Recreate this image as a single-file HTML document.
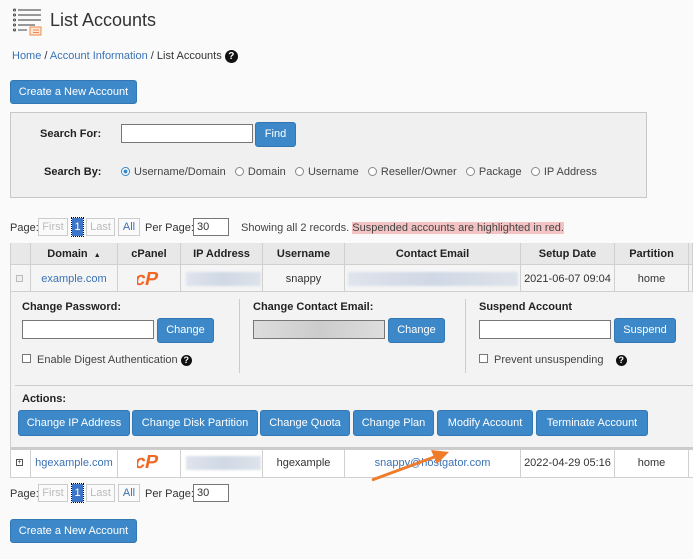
<!DOCTYPE html>
<html><head><meta charset="utf-8"><style>
*{box-sizing:border-box;margin:0;padding:0}
body{width:693px;height:559px;overflow:hidden;background:#fafafa;font-family:"Liberation Sans",sans-serif;font-size:11px;color:#333;position:relative}
.a{position:absolute;white-space:nowrap}
.t{margin-top:2px}
.btn{position:absolute;background:#3d88c8;color:#fff;border:1px solid #3277b3;border-radius:3px;text-align:center;font-size:11px}
.inp{position:absolute;background:#fff;border:1px solid #777}
.lnk{color:#3a72b5}
.b{font-weight:bold;color:#222}
.pg{position:absolute;border:1px solid #ccc;color:#bbb;text-align:center;height:18px;line-height:16px;background:#fafafa}
.radio{display:inline-block;width:9px;height:9px;border:1px solid #888;border-radius:50%;vertical-align:-1px;margin-right:4px;background:#fff}
.cb{position:absolute;width:9px;height:9px;border:1px solid #777;background:#fff}
.q{display:inline-block;width:13px;height:13px;border-radius:50%;background:#111;color:#fff;font-weight:bold;font-size:10px;text-align:center;line-height:13px}
.blur{position:absolute;background:linear-gradient(90deg,#dfe4ec,#cfd8e5,#dde3ea);filter:blur(1px);height:14px}
.cell{position:absolute;border-right:1px solid #d0d0d0;text-align:center;line-height:23px}
</style></head><body>
<svg class="a" style="left:13px;top:8px" width="30" height="28" viewBox="0 0 30 28">
<g fill="none" stroke="#444" stroke-width="1"><circle cx="1.5" cy="2" r="1"/><circle cx="1.5" cy="7" r="1"/><circle cx="1.5" cy="12" r="1"/><circle cx="1.5" cy="17" r="1"/><circle cx="1.5" cy="22" r="1"/></g>
<g stroke="#777" stroke-width="1.4"><line x1="5" y1="2" x2="28" y2="2"/><line x1="5" y1="7" x2="28" y2="7"/><line x1="5" y1="12" x2="28" y2="12"/><line x1="5" y1="17" x2="22" y2="17"/><line x1="5" y1="22" x2="14" y2="22"/></g>
<rect x="17" y="19" width="11" height="8" fill="#fde6d4" stroke="#f08a4b"/><line x1="20" y1="22" x2="26" y2="22" stroke="#f08a4b"/><line x1="20" y1="24.5" x2="26" y2="24.5" stroke="#f08a4b"/>
</svg>
<div class="a" style="left:50px;top:10px;font-size:18px;color:#333">List Accounts</div>
<div class="a" style="left:12px;top:50px;font-size:11px"><span class="lnk">Home</span> / <span class="lnk">Account Information</span> / List Accounts <span class="q">?</span></div>
<div class="btn" style="left:10px;top:80px;width:127px;height:24px;line-height:22px">Create a New Account</div>

<div class="a" style="left:10px;top:112px;width:637px;height:86px;background:#f0f0f0;border:1px solid #c8c8c8"></div>
<div class="a b t" style="left:40px;top:126px">Search For:</div>
<div class="inp" style="left:121px;top:124px;width:132px;height:19px"></div>
<div class="btn" style="left:255px;top:122px;width:41px;height:25px;line-height:23px">Find</div>
<div class="a b t" style="left:44px;top:164px">Search By:</div>
<div class="a t" style="left:121px;top:164px;color:#444"><span class="radio" style="border-color:#3d88c8;background:radial-gradient(#3d88c8 35%,#fff 45%)"></span>Username/Domain &nbsp; <span class="radio"></span>Domain &nbsp; <span class="radio"></span>Username &nbsp; <span class="radio"></span>Reseller/Owner &nbsp; <span class="radio"></span>Package &nbsp; <span class="radio"></span>IP Address</div>

<div class="a t" style="left:10px;top:220px">Page:</div>
<div class="pg" style="left:38px;top:218px;width:30px">First</div>
<div class="a" style="left:72px;top:218px;width:11px;height:18px;background:#3d76c8;color:#fff;text-align:center;line-height:18px;outline:1px dotted #000">1</div>
<div class="pg" style="left:86px;top:218px;width:29px">Last</div>
<div class="pg" style="left:118px;top:218px;width:22px;color:#3a72b5">All</div>
<div class="a t" style="left:145px;top:220px">Per Page:</div>
<div class="inp" style="left:193px;top:218px;width:36px;height:18px;padding-left:3px;line-height:16px">30</div>
<div class="a t" style="left:241px;top:220px;color:#444">Showing all 2 records. <span style="background:#f4c4c4">Suspended accounts are highlighted in red.</span></div>

<div class="a" style="left:10px;top:243px;width:683px;height:235px;border-top:1px solid #d0d0d0;border-left:1px solid #d0d0d0"></div>
<div class="a" style="left:11px;top:243px;width:682px;height:22px;background:#e8e8e8;border-bottom:1px solid #d0d0d0"></div>
<div class="a" style="left:11px;top:265px;width:682px;height:27px;background:#f5f5f5;border-bottom:1px solid #d0d0d0"></div>
<div class="a" style="left:11px;top:449px;width:682px;height:29px;background:#fff;border-bottom:1px solid #d0d0d0;border-top:1px solid #ccc"></div>
<div class="cell b" style="left:11px;top:243px;width:20px;height:49px"></div>
<div class="cell b" style="left:31px;top:243px;width:87px;height:22px">Domain &nbsp;<span style="font-size:7px">▲</span></div>
<div class="cell b" style="left:118px;top:243px;width:63px;height:22px">cPanel</div>
<div class="cell b" style="left:181px;top:243px;width:82px;height:22px">IP Address</div>
<div class="cell b" style="left:263px;top:243px;width:82px;height:22px">Username</div>
<div class="cell b" style="left:345px;top:243px;width:176px;height:22px">Contact Email</div>
<div class="cell b" style="left:521px;top:243px;width:94px;height:22px">Setup Date</div>
<div class="cell b" style="left:615px;top:243px;width:74px;height:22px">Partition</div>
<div class="cell" style="left:31px;top:265px;width:87px;height:27px;line-height:28px" ><span class="lnk">example.com</span></div>
<div class="cell" style="left:118px;top:265px;width:63px;height:27px"></div>
<div class="cell" style="left:181px;top:265px;width:82px;height:27px"></div>
<div class="cell" style="left:263px;top:265px;width:82px;height:27px;line-height:28px">snappy</div>
<div class="cell" style="left:345px;top:265px;width:176px;height:27px"></div>
<div class="cell" style="left:521px;top:265px;width:94px;height:27px;line-height:28px">2021-06-07 09:04</div>
<div class="cell" style="left:615px;top:265px;width:74px;height:27px;line-height:28px">home</div>
<div class="cell" style="left:689px;top:243px;width:4px;height:49px"></div>
<div class="a" style="left:16px;top:275px;width:7px;height:7px;border:1px solid #bbb;background:#eee"></div>
<div class="blur" style="left:186px;top:272px;width:75px"></div>
<div class="blur" style="left:348px;top:272px;width:170px"></div>
<svg class="a" style="left:137px;top:270px" width="24" height="17" viewBox="0 0 24 17"><text x="0" y="15" font-family="Liberation Sans" font-weight="bold" font-size="19" fill="#f26522" transform="skewX(-12)" textLength="23">cP</text></svg>

<div class="a" style="left:11px;top:292px;width:682px;height:157px;background:#f3f3f3;border-bottom:2px solid #ccc"></div>
<div class="a b t" style="left:22px;top:299px">Change Password:</div>
<div class="inp" style="left:22px;top:320px;width:132px;height:19px"></div>
<div class="btn" style="left:157px;top:318px;width:57px;height:25px;line-height:23px">Change</div>
<div class="cb" style="left:22px;top:354px"></div>
<div class="a t" style="left:37px;top:352px;color:#444">Enable Digest Authentication <span class="q" style="width:11px;height:11px;line-height:11px;font-size:9px">?</span></div>
<div class="a" style="left:239px;top:299px;width:1px;height:74px;background:#ccc"></div>
<div class="a b t" style="left:253px;top:299px">Change Contact Email:</div>
<div class="inp" style="left:253px;top:320px;width:132px;height:19px;background:linear-gradient(90deg,#ddd,#ccc,#ddd)"></div>
<div class="btn" style="left:388px;top:318px;width:57px;height:25px;line-height:23px">Change</div>
<div class="a" style="left:465px;top:299px;width:1px;height:74px;background:#ccc"></div>
<div class="a b t" style="left:479px;top:299px">Suspend Account</div>
<div class="inp" style="left:479px;top:320px;width:132px;height:19px"></div>
<div class="btn" style="left:614px;top:318px;width:62px;height:25px;line-height:23px">Suspend</div>
<div class="cb" style="left:479px;top:354px"></div>
<div class="a t" style="left:494px;top:352px;color:#444">Prevent unsuspending &nbsp;&nbsp; <span class="q" style="width:11px;height:11px;line-height:11px;font-size:9px">?</span></div>
<div class="a" style="left:15px;top:385px;width:678px;height:1px;background:#ccc"></div>
<div class="a b t" style="left:22px;top:391px">Actions:</div>
<div class="btn" style="left:18px;top:410px;width:112px;height:26px;line-height:24px">Change IP Address</div>
<div class="btn" style="left:132px;top:410px;width:126px;height:26px;line-height:24px">Change Disk Partition</div>
<div class="btn" style="left:260px;top:410px;width:90px;height:26px;line-height:24px">Change Quota</div>
<div class="btn" style="left:353px;top:410px;width:81px;height:26px;line-height:24px">Change Plan</div>
<div class="btn" style="left:437px;top:410px;width:96px;height:26px;line-height:24px">Modify Account</div>
<div class="btn" style="left:536px;top:410px;width:112px;height:26px;line-height:24px">Terminate Account</div>

<div class="cell" style="left:11px;top:450px;width:20px;height:28px"></div>
<div class="a" style="left:16px;top:459px;width:7px;height:7px;border:1px solid #555;background:#fff;font-size:7px;line-height:5px;text-align:center">+</div>
<div class="cell" style="left:31px;top:450px;width:87px;height:28px;line-height:27px"><span class="lnk">hgexample.com</span></div>
<div class="cell" style="left:118px;top:450px;width:63px;height:28px"></div>
<div class="cell" style="left:181px;top:450px;width:82px;height:28px"></div>
<div class="cell" style="left:263px;top:450px;width:82px;height:28px;line-height:27px">hgexample</div>
<div class="cell" style="left:345px;top:450px;width:176px;height:28px;line-height:27px"><span class="lnk">snappy@hostgator.com</span></div>
<div class="cell" style="left:521px;top:450px;width:94px;height:28px;line-height:27px">2022-04-29 05:16</div>
<div class="cell" style="left:615px;top:450px;width:74px;height:28px;line-height:27px">home</div>
<div class="blur" style="left:186px;top:456px;width:75px"></div>
<svg class="a" style="left:137px;top:453px" width="24" height="17" viewBox="0 0 24 17"><text x="0" y="15" font-family="Liberation Sans" font-weight="bold" font-size="19" fill="#f26522" transform="skewX(-12)" textLength="23">cP</text></svg>
<svg class="a" style="left:365px;top:446px" width="90" height="40" viewBox="0 0 90 40"><line x1="7" y1="34" x2="72" y2="10" stroke="#f07b2a" stroke-width="3"/><polygon points="84,6 66,4 72,18" fill="#f07b2a"/></svg>

<div class="a t" style="left:10px;top:486px">Page:</div>
<div class="pg" style="left:38px;top:484px;width:30px">First</div>
<div class="a" style="left:72px;top:484px;width:11px;height:18px;background:#3d76c8;color:#fff;text-align:center;line-height:18px;outline:1px dotted #000">1</div>
<div class="pg" style="left:86px;top:484px;width:29px">Last</div>
<div class="pg" style="left:118px;top:484px;width:22px;color:#3a72b5">All</div>
<div class="a t" style="left:145px;top:486px">Per Page:</div>
<div class="inp" style="left:193px;top:484px;width:36px;height:18px;padding-left:3px;line-height:16px">30</div>
<div class="btn" style="left:10px;top:519px;width:127px;height:24px;line-height:22px">Create a New Account</div>
</body></html>
